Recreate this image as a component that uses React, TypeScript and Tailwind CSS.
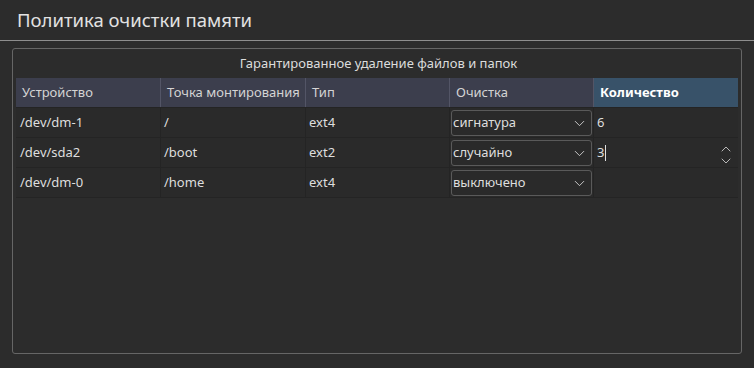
import { ChevronDown, ChevronUp } from 'lucide-react'

type Row = { device: string; mount: string; fs: string; mode: string; count: string; editing?: boolean }

const rows: Row[] = [
  { device: '/dev/dm-1', mount: '/', fs: 'ext4', mode: 'сигнатура', count: '6' },
  { device: '/dev/sda2', mount: '/boot', fs: 'ext2', mode: 'случайно', count: '3', editing: true },
  { device: '/dev/dm-0', mount: '/home', fs: 'ext4', mode: 'выключено', count: '' },
]

const cols = 'grid grid-cols-[145px_145px_144px_144px_144px]'

const Combo = ({ value }: { value: string }) => (
  <div className="mx-px my-[2px] h-[26px] flex items-center justify-between rounded-[3px] border border-[#5a5a5a] pl-px pr-[3px]">
    <span>{value}</span>
    <ChevronDown size={17} strokeWidth={1.3} className="text-[#d0d0d0]" />
  </div>
)

const App = () => {
  return (
    <div
      className="w-[754px] h-[368px] bg-[#2c2c2c] text-[#dedede] text-[13px] overflow-hidden"
      style={{ fontFamily: '"Noto Sans", "Open Sans", sans-serif' }}
    >
      <div className="h-[40px] flex items-center pl-[17px] text-[18.5px] text-[#e2e2e2]">
        Политика очистки памяти
      </div>
      <div className="h-px bg-[#8e8e8e]" />

      <div className="mt-[7px] ml-[12px] w-[730px] h-[306px] rounded-[3px] border border-[#666666] pl-[3px]">
        <div className="h-[29px] flex items-center justify-center text-[#dcdcdc]">
          Гарантированное удаление файлов и папок
        </div>

        <div className="w-[722px] bg-[#2a2a2a]">
          {/* header */}
          <div className={`${cols} h-[29px] bg-[#3c3e4d] text-[#d4d4d4]`}>
            <div className="flex items-center pl-[6px] border-r border-[#535566]">Устройство</div>
            <div className="flex items-center pl-[6px] border-r border-[#535566]">Точка монтирования</div>
            <div className="flex items-center pl-[6px] border-r border-[#535566]">Тип</div>
            <div className="flex items-center pl-[6px] border-r border-[#535566]">Очистка</div>
            <div className="flex items-center pl-[6px] bg-[#385269] font-bold text-white">Количество</div>
          </div>

          {rows.map((r) => (
            <div key={r.device} className={`${cols} h-[30px] border-t border-[#242424]`}>
              <div className="flex items-center pl-[4px] border-r border-[#242424]">{r.device}</div>
              <div className="flex items-center pl-[3px] border-r border-[#242424]">{r.mount}</div>
              <div className="flex items-center pl-[3px] border-r border-[#242424]">{r.fs}</div>
              <div className="border-r border-[#242424]">
                <Combo value={r.mode} />
              </div>
              <div className="relative flex items-center pl-[3px]">
                <span>{r.count}</span>
                {r.editing && (
                  <>
                    <span className="ml-px w-px h-[16px] bg-[#e0e0e0]" />
                    <div className="absolute right-[4px] top-[3px] flex flex-col text-[#cfcfcf]">
                      <ChevronUp size={16} strokeWidth={1.3} className="-mb-[4px]" />
                      <ChevronDown size={16} strokeWidth={1.3} />
                    </div>
                  </>
                )}
              </div>
            </div>
          ))}
          <div className="border-t border-[#242424]" />
        </div>
      </div>
    </div>
  )
}

export default App
